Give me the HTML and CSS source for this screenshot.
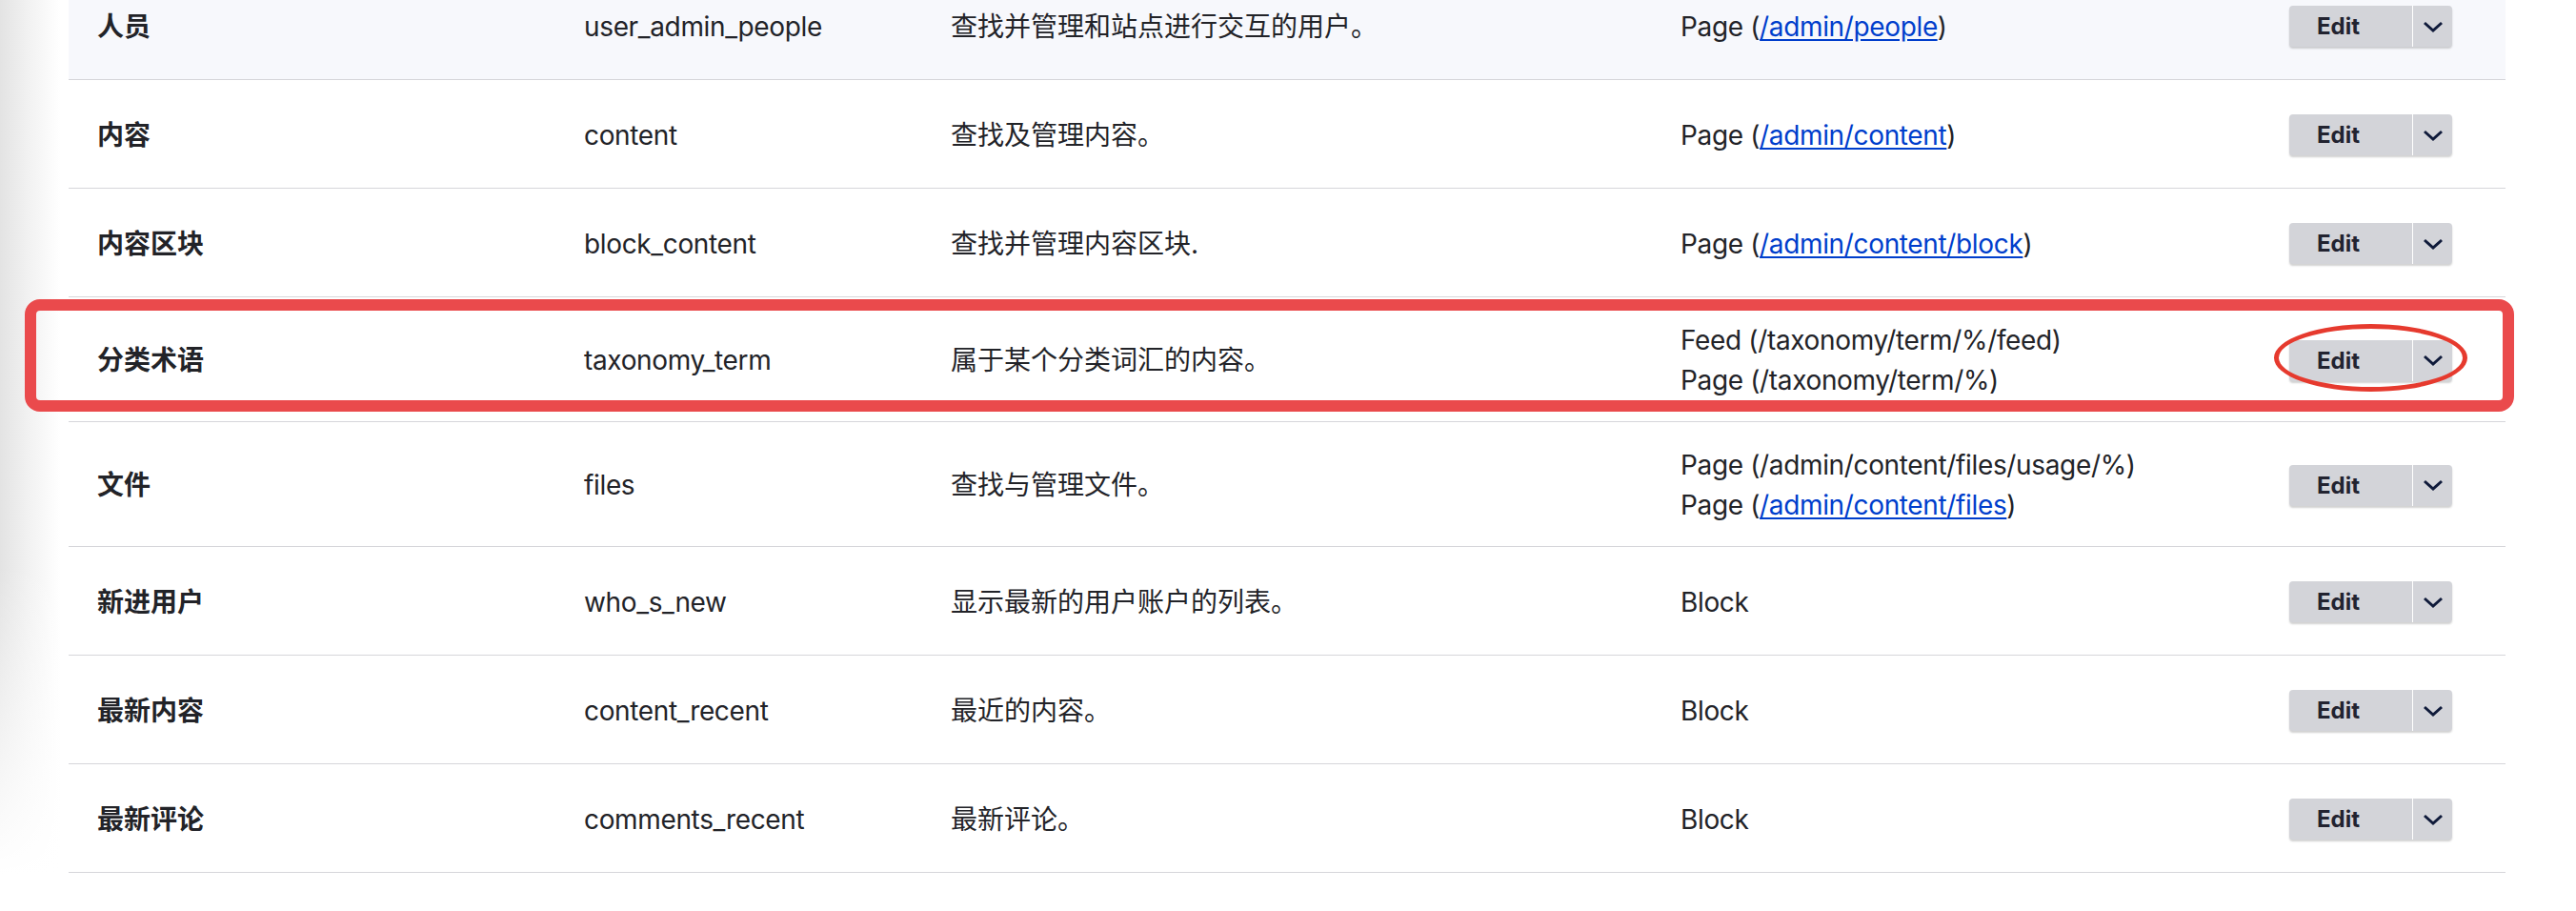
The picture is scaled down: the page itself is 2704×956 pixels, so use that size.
FILE: index.html
```html
<!DOCTYPE html>
<html lang="zh-CN">
<head>
  <meta charset="UTF-8">
  <meta name="viewport" content="width=device-width, initial-scale=1.0">
  <link rel="stylesheet" href="styles.css">
  <title>Views</title>
</head>
<body>
  <div class="page">
    <!-- shadow of the sidebar on the left -->
    <div class="edge"></div>

    <div class="views-table">
      <div class="row row-hover">
        <div class="name">人员</div>
        <div class="machine">user_admin_people</div>
        <div class="desc">查找并管理和站点进行交互的用户。</div>
        <div class="displays">Page (<a href="#">/admin/people</a>)</div>
        <div class="ops">
          <div class="dropbutton"><span class="main">Edit</span><span class="toggle"><svg viewBox="0 0 22 12"><path d="M2 2 L11 10 L20 2"/></svg></span></div>
        </div>
      </div>

      <div class="row">
        <div class="name">内容</div>
        <div class="machine">content</div>
        <div class="desc">查找及管理内容。</div>
        <div class="displays">Page (<a href="#">/admin/content</a>)</div>
        <div class="ops">
          <div class="dropbutton"><span class="main">Edit</span><span class="toggle"><svg viewBox="0 0 22 12"><path d="M2 2 L11 10 L20 2"/></svg></span></div>
        </div>
      </div>

      <div class="row">
        <div class="name">内容区块</div>
        <div class="machine">block_content</div>
        <div class="desc">查找并管理内容区块.</div>
        <div class="displays">Page (<a href="#">/admin/content/block</a>)</div>
        <div class="ops">
          <div class="dropbutton"><span class="main">Edit</span><span class="toggle"><svg viewBox="0 0 22 12"><path d="M2 2 L11 10 L20 2"/></svg></span></div>
        </div>
      </div>

      <!-- highlighted row -->
      <div class="row marked">
        <div class="name">分类术语</div>
        <div class="machine">taxonomy_term</div>
        <div class="desc">属于某个分类词汇的内容。</div>
        <div class="displays">Feed (/taxonomy/term/%/feed)<br>Page (/taxonomy/term/%)</div>
        <div class="ops">
          <div class="dropbutton"><span class="main">Edit</span><span class="toggle"><svg viewBox="0 0 22 12"><path d="M2 2 L11 10 L20 2"/></svg></span></div>
          <div class="circle"></div>
        </div>
        <div class="frame"></div>
      </div>

      <div class="row">
        <div class="name">文件</div>
        <div class="machine">files</div>
        <div class="desc">查找与管理文件。</div>
        <div class="displays">Page (/admin/content/files/usage/%)<br>Page (<a href="#">/admin/content/files</a>)</div>
        <div class="ops">
          <div class="dropbutton"><span class="main">Edit</span><span class="toggle"><svg viewBox="0 0 22 12"><path d="M2 2 L11 10 L20 2"/></svg></span></div>
        </div>
      </div>

      <div class="row">
        <div class="name">新进用户</div>
        <div class="machine">who_s_new</div>
        <div class="desc">显示最新的用户账户的列表。</div>
        <div class="displays">Block</div>
        <div class="ops">
          <div class="dropbutton"><span class="main">Edit</span><span class="toggle"><svg viewBox="0 0 22 12"><path d="M2 2 L11 10 L20 2"/></svg></span></div>
        </div>
      </div>

      <div class="row">
        <div class="name">最新内容</div>
        <div class="machine">content_recent</div>
        <div class="desc">最近的内容。</div>
        <div class="displays">Block</div>
        <div class="ops">
          <div class="dropbutton"><span class="main">Edit</span><span class="toggle"><svg viewBox="0 0 22 12"><path d="M2 2 L11 10 L20 2"/></svg></span></div>
        </div>
      </div>

      <div class="row">
        <div class="name">最新评论</div>
        <div class="machine">comments_recent</div>
        <div class="desc">最新评论。</div>
        <div class="displays">Block</div>
        <div class="ops">
          <div class="dropbutton"><span class="main">Edit</span><span class="toggle"><svg viewBox="0 0 22 12"><path d="M2 2 L11 10 L20 2"/></svg></span></div>
        </div>
      </div>
    </div>
  </div>
</body>
</html>
```

FILE: styles.css
```css
body {
  margin: 0;
  padding: 0;
  background: #fff;
  font-family: Inter, "Noto Sans CJK SC", sans-serif;
  font-size: 28px;
  line-height: 42px;
  color: #222328;
  overflow: hidden;
}

.page {
  display: flex;
  height: 956px;
}

.edge {
  width: 72px;
  flex-shrink: 0;
  background:
    linear-gradient(to bottom, rgba(255,255,255,0) 62%, #fff 96%),
    linear-gradient(to right, #e3e3e3 0%, #f1f1f1 40%, #fff 88%);
}

.views-table {
  width: 2558px;
  margin-top: -30px;
}

.row {
  display: grid;
  grid-template-columns: 511px 385px 766px 639px 1fr;
  align-items: center;
  min-height: 114px;
  padding: 24px 0 22px 30px;
  box-sizing: border-box;
  border-bottom: 1px solid #d6d6da;
  position: relative;
}

.row-hover {
  background: #f7f8fc;
}

.name {
  font-weight: 700;
}

.machine, .displays {
  letter-spacing: -0.35px;
}

.displays a {
  color: #003ecc;
  text-decoration: underline;
  text-underline-offset: 3px;
}

.ops {
  position: relative;
}

/* Edit split button */
.dropbutton {
  display: flex;
  width: 171px;
  height: 43px;
  background: #d3d4d9;
  border-radius: 4px;
  box-shadow: 0 2px 2px rgba(0, 0, 0, 0.18);
  font-size: 24px;
  font-weight: 700;
  line-height: 43px;
  color: #222330;
}

.dropbutton .main {
  width: 130px;
  padding-left: 29px;
  box-sizing: border-box;
  border-right: 1px solid #fff;
}

.dropbutton .toggle {
  flex: 1;
  display: flex;
  align-items: center;
  justify-content: center;
}

.toggle svg {
  width: 22px;
  height: 12px;
  fill: none;
  stroke: #0f1a3a;
  stroke-width: 3;
}

/* annotation marks */
.circle {
  position: absolute;
  left: -16px;
  top: -17px;
  width: 203px;
  height: 71px;
  border: 5px solid #e63a2e;
  border-radius: 50%;
  box-sizing: border-box;
}

.frame {
  position: absolute;
  left: -46px;
  right: -9px;
  top: 2px;
  bottom: 10px;
  border: 12px solid #ea4a4c;
  border-radius: 16px;
  pointer-events: none;
}
```
